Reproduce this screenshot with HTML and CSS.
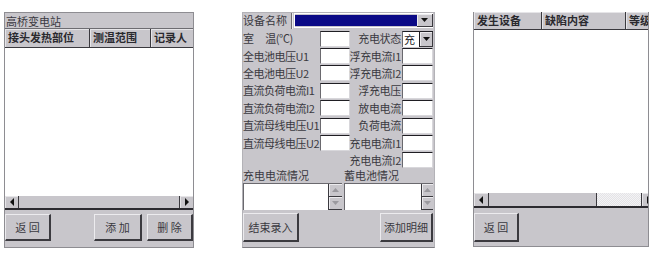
FILE: index.html
```html
<!DOCTYPE html>
<html lang="zh-CN">
<head>
<meta charset="utf-8">
<title>变电站记录</title>
<link rel="stylesheet" href="styles.css">
</head>
<body>
  <section class="panel p1">
    <div class="titlebar">高桥变电站</div>
    <div class="thead">
      <div class="th w85">接头发热部位</div>
      <div class="th w61">测温范围</div>
      <div class="th grow">记录人</div>
    </div>
    <div class="list"></div>
    <div class="hscroll">
      <div class="sbtn"><svg width="6" height="8" viewBox="0 0 6 8"><polygon points="5,0 5,8 1,4" fill="#111"/></svg></div>
      <div class="thumb grow"></div>
      <div class="sbtn"><svg width="6" height="8" viewBox="0 0 6 8"><polygon points="1,0 1,8 5,4" fill="#111"/></svg></div>
    </div>
    <div class="toolbar">
      <button class="btn b46">返 回</button>
      <span class="grow"></span>
      <button class="btn b48">添 加</button>
      <button class="btn b46 ml5">删 除</button>
    </div>
  </section>

  <section class="panel p2">
    <div class="row1">
      <div class="lbl-box">设备名称</div>
      <div class="combo-blue"><div class="blue"></div><div class="ddbtn"><svg width="7" height="4" viewBox="0 0 7 4"><polygon points="0,0 7,0 3.5,4" fill="#111"/></svg></div></div>
    </div>
    <div class="form">
      <div class="l">室&nbsp;&nbsp;&nbsp;&nbsp;&nbsp;&nbsp;温(℃)</div><div class="inp"></div><div class="r">充电状态</div><div class="combo-sm"><span class="cv">充</span><div class="ddbtn sm"><svg width="7" height="4" viewBox="0 0 7 4"><polygon points="0,0 7,0 3.5,4" fill="#111"/></svg></div></div>
      <div class="l">全电池电压U1</div><div class="inp"></div><div class="r">浮充电流I1</div><div class="inp"></div>
      <div class="l">全电池电压U2</div><div class="inp"></div><div class="r">浮充电流I2</div><div class="inp"></div>
      <div class="l">直流负荷电流I1</div><div class="inp"></div><div class="r">浮充电压</div><div class="inp"></div>
      <div class="l">直流负荷电流I2</div><div class="inp"></div><div class="r">放电电流</div><div class="inp"></div>
      <div class="l">直流母线电压U1</div><div class="inp"></div><div class="r">负荷电流</div><div class="inp"></div>
      <div class="l">直流母线电压U2</div><div class="inp"></div><div class="r">充电电流I1</div><div class="inp"></div>
      <div class="l"></div><div></div><div class="r">充电电流I2</div><div class="inp"></div>
    </div>
    <div class="ta-labels">
      <div class="w99">充电电流情况</div>
      <div class="w89">蓄电池情况</div>
    </div>
    <div class="ta-row">
      <div class="ta w99"><div class="ta-body"></div><div class="vscroll"><div class="vbtn"><svg width="7" height="4" viewBox="0 0 7 4"><polygon points="0,4 7,4 3.5,0" fill="#9a999e"/></svg></div><div class="vbtn"><svg width="7" height="4" viewBox="0 0 7 4"><polygon points="0,0 7,0 3.5,4" fill="#9a999e"/></svg></div></div></div>
      <div class="ta w89"><div class="ta-body"></div><div class="vscroll narrow"><div class="vbtn"><svg width="7" height="4" viewBox="0 0 7 4"><polygon points="0,4 7,4 3.5,0" fill="#9a999e"/></svg></div><div class="vbtn"><svg width="7" height="4" viewBox="0 0 7 4"><polygon points="0,0 7,0 3.5,4" fill="#9a999e"/></svg></div></div></div>
    </div>
    <div class="btn-row">
      <button class="btn b56">结束录入</button>
      <button class="btn b53">添加明细</button>
    </div>
  </section>

  <section class="panel p3">
    <div class="thead h18">
      <div class="th w68">发生设备</div>
      <div class="th w84">缺陷内容</div>
      <div class="th grow">等级</div>
    </div>
    <div class="list l3"></div>
    <div class="hscroll h15">
      <div class="sbtn w15"><svg width="6" height="8" viewBox="0 0 6 8"><polygon points="5,0 5,8 1,4" fill="#111"/></svg></div>
      <div class="thumb w108"></div>
      <div class="dither"></div>
      <div class="sbtn w15"><svg width="6" height="8" viewBox="0 0 6 8"><polygon points="1,0 1,8 5,4" fill="#111"/></svg></div>
    </div>
    <div class="toolbar t3">
      <button class="btn b45">返 回</button>
    </div>
  </section>
</body>
</html>
```

FILE: styles.css
```css
* { box-sizing: border-box; margin: 0; padding: 0; }

body {
  margin: 0;
  background: #ffffff;
  font-family: "Noto Sans CJK SC", "Noto Sans", sans-serif;
  font-size: 11px;
  line-height: 1;
  color: #26252a;
  display: flex;
  align-items: flex-start;
  padding: 12px 0 0 4px;
}

.grow { flex: 1; min-width: 0; }

.panel {
  background: #c8c6cb;
  display: flex;
  flex-direction: column;
  overflow: hidden;
}

/* ---------- left panel ---------- */
.p1 {
  width: 190px;
  height: 236px;
  border: 1px solid #8e8d92;
}

.titlebar {
  height: 16px;
  line-height: 16px;
  padding-left: 1px;
  border-bottom: 1px solid #6d6c71;
  white-space: nowrap;
  color: #3a3940;
}

.thead {
  display: flex;
  height: 19px;
  border-bottom: 1px solid #3a393e;
  background: #c8c6cb;
}
.thead.h18 { height: 18px; }

.th {
  font-weight: 700;
  line-height: 17px;
  padding-left: 3px;
  white-space: nowrap;
  overflow: hidden;
  border-right: 1px solid #3a393e;
  box-shadow: inset 1px 1px 0 #e6e5e8;
  color: #2a292e;
}
.th.grow { border-right: 0; }
.w85 { width: 85px; flex: none; }
.w61 { width: 61px; flex: none; }
.w68 { width: 68px; flex: none; }
.w84 { width: 84px; flex: none; }

.list {
  height: 148px;
  background: #ffffff;
}

.hscroll {
  display: flex;
  height: 14px;
  border-bottom: 2px solid #2c2b30;
  background: #c8c6cb;
}
.hscroll.h15 { height: 15px; }

.sbtn {
  width: 14px;
  flex: none;
  display: flex;
  align-items: center;
  justify-content: center;
  border-right: 1px solid #3a393e;
  box-shadow: inset 1px 1px 0 #e6e5e8;
}
.sbtn:last-child { border-right: 0; border-left: 1px solid #3a393e; }
.sbtn.w15 { width: 15px; }

.thumb {
  background: #c8c6cb;
}
.thumb.w108 {
  width: 108px;
  flex: none;
  border-right: 1px solid #3a393e;
}

.dither {
  width: 44px;
  flex: none;
  background: repeating-conic-gradient(#e4e3e6 0% 25%, #f3f3f5 0% 50%) 0 0 / 2px 2px;
}

.toolbar {
  display: flex;
  align-items: flex-start;
  padding-top: 4px;
  flex: 1;
}

.btn {
  font-family: inherit;
  font-size: 11px;
  color: #3a3940;
  background: #c8c6cb;
  height: 27px;
  border-top: 1px solid #ecebee;
  border-left: 1px solid #ecebee;
  border-right: 2px solid #3b3a3f;
  border-bottom: 2px solid #3b3a3f;
  letter-spacing: 0;
}
.b45 { width: 45px; height: 29px; }
.b46 { width: 46px; }
.b48 { width: 48px; }
.b53 { width: 53px; height: 29px; }
.b56 { width: 56px; height: 29px; }
.ml5 { margin-left: 5px; }

/* ---------- middle panel ---------- */
.p2 {
  width: 193px;
  height: 236px;
  margin-left: 48px;
  border: 1px solid #b3b2b7;
  border-bottom-color: #7c7b80;
  padding-right: 1px;
}

.row1 {
  display: flex;
  height: 16px;
}

.lbl-box {
  width: 49px;
  line-height: 15px;
  border-right: 1px solid #6f6e73;
  box-shadow: 1px 0 0 #ecebee;
  white-space: nowrap;
  color: #3a3940;
}

.combo-blue {
  display: flex;
  margin-left: 2px;
  flex: 1;
  height: 15px;
  border: 1px solid #ffffff;
  border-right: 0;
}
.blue {
  flex: 1;
  background: #0b0a86;
  margin: 1px 0;
}
.ddbtn {
  width: 16px;
  display: flex;
  align-items: center;
  justify-content: center;
  background: #c8c6cb;
  border-right: 1px solid #3b3a3f;
  border-bottom: 1px solid #3b3a3f;
  box-shadow: inset 1px 1px 0 #ecebee;
}
.ddbtn.sm { width: 13px; }

.form {
  display: grid;
  grid-template-columns: 77px 30px 52px 31px;
  grid-auto-rows: 17.4px;
  align-items: center;
  margin-top: 1px;
}

.l {
  white-space: nowrap;
  overflow: visible;
  color: #3a3940;
  line-height: 17px;
  letter-spacing: -0.5px;
}
.r {
  white-space: nowrap;
  text-align: right;
  padding-right: 1px;
  color: #3a3940;
  line-height: 17px;
  direction: rtl;
  letter-spacing: -0.3px;
}

.inp {
  height: 16px;
  background: #ffffff;
  border-top: 1px solid #1f1e23;
  border-left: 1px solid #6a696e;
  border-right: 1px solid #d8d7db;
  border-bottom: 1px solid #d8d7db;
}

.combo-sm {
  display: flex;
  height: 16px;
  background: #ffffff;
  border-top: 1px solid #1f1e23;
  border-left: 1px solid #6a696e;
}
.cv {
  flex: 1;
  overflow: hidden;
  line-height: 14px;
  padding-left: 1px;
  border-right: 1px solid #1f1e23;
  white-space: nowrap;
}

.ta-labels {
  display: flex;
  height: 13px;
  gap: 2px;
  line-height: 13px;
  color: #3a3940;
  white-space: nowrap;
}

.w99 { width: 99px; flex: none; }
.w89 { width: 89px; flex: none; }

.ta-row {
  display: flex;
  gap: 2px;
  height: 27px;
  margin-top: 1px;
}

.ta {
  display: flex;
  background: #ffffff;
  border-top: 1px solid #6a696e;
  border-left: 1px solid #6a696e;
}
.ta-body { flex: 1; }

.vscroll {
  width: 14px;
  display: flex;
  flex-direction: column;
  border-left: 1px solid #3b3a3f;
}
.vscroll.narrow { width: 12px; }

.vbtn {
  flex: 1;
  display: flex;
  align-items: center;
  justify-content: center;
  background: #c8c6cb;
  border-bottom: 1px solid #3b3a3f;
  box-shadow: inset 1px 1px 0 #ecebee;
}

.btn-row {
  display: flex;
  justify-content: space-between;
  margin-top: 3px;
}

/* ---------- right panel ---------- */
.p3 {
  width: 176px;
  height: 235px;
  margin-left: 38px;
  border-left: 1px solid #8e8d92;
  border-right: 1px solid #8e8d92;
  border-bottom: 1px solid #8e8d92;
}

.list.l3 { height: 163px; }

.toolbar.t3 { padding-top: 5px; }
```
